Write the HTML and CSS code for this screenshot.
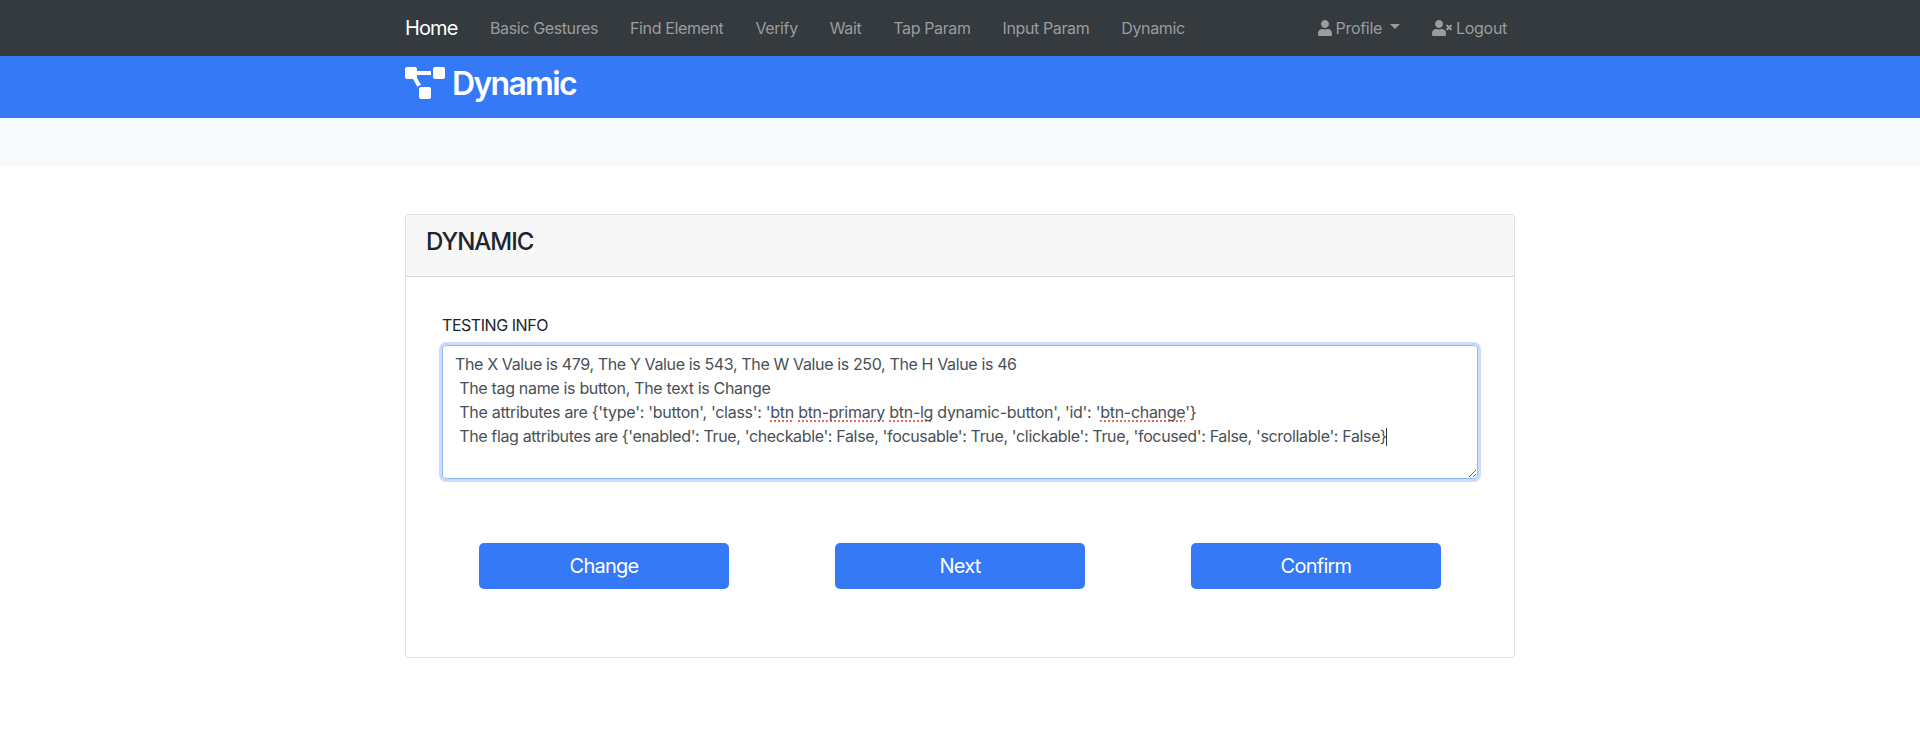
FILE: index.html
```html
<!DOCTYPE html>
<html lang="en">
<head>
<meta charset="utf-8">
<title>Dynamic</title>
<link rel="stylesheet" href="styles.css">
</head>
<body>
<nav class="navbar">
  <div class="container navbar-inner">
    <a class="brand">Home</a>
    <div class="links">
      <a>Basic Gestures</a><a>Find Element</a><a>Verify</a><a>Wait</a><a>Tap Param</a><a>Input Param</a><a>Dynamic</a>
    </div>
    <div class="account">
      <a><svg width="14" height="16" viewBox="0 0 448 512"><path d="M224 256c70.7 0 128-57.3 128-128S294.7 0 224 0 96 57.3 96 128s57.3 128 128 128zm89.6 32h-16.7c-22.2 10.2-46.9 16-72.9 16s-50.6-5.8-72.9-16h-16.7C60.2 288 0 348.2 0 422.4V464c0 26.5 21.5 48 48 48h352c26.5 0 48-21.5 48-48v-41.6c0-74.2-60.2-134.4-134.4-134.4z"/></svg><span>Profile</span><i class="caret"></i></a>
      <a><svg width="20" height="16" viewBox="0 0 640 512"><path d="M224 256c70.7 0 128-57.3 128-128S294.7 0 224 0 96 57.3 96 128s57.3 128 128 128zm89.6 32h-16.7c-22.2 10.2-46.9 16-72.9 16s-50.6-5.8-72.9-16h-16.7C60.2 288 0 348.2 0 422.4V464c0 26.5 21.5 48 48 48h352c26.5 0 48-21.5 48-48v-41.6c0-74.2-60.2-134.4-134.4-134.4z"/><path d="M589.6 240l45.6-45.6c6.3-6.3 6.3-16.5 0-22.8l-22.8-22.8c-6.3-6.3-16.5-6.3-22.8 0L544 194.4l-45.6-45.6c-6.3-6.3-16.5-6.3-22.8 0l-22.8 22.8c-6.3 6.3-6.3 16.5 0 22.8l45.6 45.6-45.6 45.6c-6.3 6.3-6.3 16.5 0 22.8l22.8 22.8c6.3 6.3 16.5 6.3 22.8 0l45.6-45.6 45.6 45.6c6.3 6.3 16.5 6.3 22.8 0l22.8-22.8c6.3-6.3 6.3-16.5 0-22.8L589.6 240z"/></svg><span>Logout</span></a>
    </div>
  </div>
</nav>
<header class="banner">
  <div class="container banner-inner">
    <svg width="40" height="32" viewBox="0 0 640 512"><path d="M384 320H256c-17.67 0-32 14.33-32 32v128c0 17.67 14.33 32 32 32h128c17.67 0 32-14.33 32-32V352c0-17.67-14.33-32-32-32zM192 32c0-17.67-14.33-32-32-32H32C14.33 0 0 14.33 0 32v128c0 17.67 14.33 32 32 32h95.72l73.16 128.04C211.98 300.98 232.4 288 256 288h.28L192 175.51V128h224V64H192V32zM608 0H480c-17.67 0-32 14.33-32 32v128c0 17.67 14.33 32 32 32h128c17.67 0 32-14.33 32-32V32c0-17.67-14.33-32-32-32z"/></svg>
    <h1>Dynamic</h1>
  </div>
</header>
<div class="strip"></div>
<main class="container">
  <section class="card">
    <div class="card-header"><h4>DYNAMIC</h4></div>
    <div class="card-body">
      <label class="label">TESTING INFO</label>
      <div class="textarea"><div class="line-position">The X Value is 479, The Y Value is 543, The W Value is 250, The H Value is 46</div><div> The tag name is button, The text is Change</div><div class="line-attributes"> The attributes are {'type': 'button', 'class': '<u>btn</u> <u>btn-primary</u> <u>btn-lg</u> dynamic-button', 'id': '<u>btn-change</u>'}</div><div class="line-flags"> The flag attributes are {'enabled': True, 'checkable': False, 'focusable': True, 'clickable': True, 'focused': False, 'scrollable': False}<i class="cursor"></i></div></div>
      <div class="buttons"><button>Change</button><button>Next</button><button>Confirm</button></div>
    </div>
  </section>
</main>
</body>
</html>
```
FILE: styles.css
```css
* { box-sizing: border-box; }
body { margin: 0; background: #fff; color: #212529; font: 400 16px/24px Inter, "Liberation Sans", sans-serif; }
.container { width: 1110px; margin: 0 auto; }
.navbar { height: 56px; background: #353a3f; color: #9a9c9f; }
.navbar-inner { height: 56px; display: flex; align-items: center; }
.brand { color: #fff; font-size: 20px; letter-spacing: -0.9px; width: 69px; }
.links { display: flex; padding-left: 16px; gap: 32px; letter-spacing: -0.38px; white-space: nowrap; }
.account { display: flex; gap: 32px; margin-left: auto; padding-right: 8px; letter-spacing: -0.3px; }
.account a { display: flex; align-items: center; }
.account svg { fill: currentColor; margin-right: 4px; }
.caret { margin-left: 8px; margin-top: -3px; border-top: 5px solid; border-left: 5px solid transparent; border-right: 5px solid transparent; }
.banner { height: 62px; background: #3579f6; color: #fff; }
.banner-inner { display: flex; padding-top: 8px; }
.banner svg { fill: currentColor; margin: 3px 7px 0 0; }
.banner h1 { margin: 1px 0 0; font-size: 32px; line-height: 38px; font-weight: 600; letter-spacing: -1.7px; }
.strip { height: 48px; background: #f8f9fb; }
.card { margin-top: 48px; height: 444px; border: 1px solid #dfdfdf; border-radius: 4px; }
.card-header { height: 62px; padding: 12px 20px; background: #f7f7f7; border-bottom: 1px solid #d7d7d7; border-radius: 3px 3px 0 0; }
.card-header h4 { margin: 0; font-size: 24px; line-height: 29px; font-weight: 500; letter-spacing: -1px; }
.card-body { padding: 36px; }
.label { display: block; margin-bottom: 8px; letter-spacing: -0.45px; }
.textarea { height: 134px; padding: 6px 12px; border: 1px solid #8fb7f8; border-radius: 4px; box-shadow: 0 0 0 3px #cbdcfd; color: #495057; white-space: pre; resize: both; overflow: hidden; letter-spacing: -0.32px; }
.line-position { letter-spacing: -0.365px; }
.line-attributes { letter-spacing: -0.285px; }
.line-flags { letter-spacing: -0.35px; }
.textarea u { text-decoration: underline dotted #f0665c 2px; text-underline-offset: 2px; text-decoration-skip-ink: none; }
.cursor { display: inline-block; width: 1px; height: 18px; background: #333; vertical-align: -4px; }
.buttons { display: flex; justify-content: space-between; padding: 64px 37px 0; }
button { width: 250px; height: 46px; padding: 0; border: 0; border-radius: 5px; background: #3579f6; color: #fff; font: 400 20px/30px Inter, "Liberation Sans", sans-serif; letter-spacing: -0.75px; }
```
